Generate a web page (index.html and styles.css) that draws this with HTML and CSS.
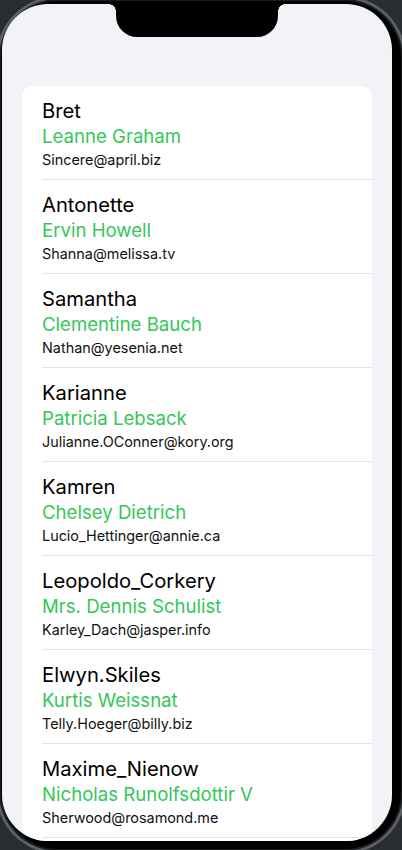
FILE: index.html
```html
<!DOCTYPE html>
<html lang="en">
<head>
<meta charset="utf-8">
<title>Users</title>
<link rel="stylesheet" href="styles.css">
</head>
<body>
<div class="device">
  <div class="screen">
    <div class="notch"></div>
    <ul class="card">
      <li class="row"><div class="username">Bret</div><div class="name">Leanne Graham</div><div class="email">Sincere@april.biz</div></li>
      <li class="row"><div class="username">Antonette</div><div class="name">Ervin Howell</div><div class="email">Shanna@melissa.tv</div></li>
      <li class="row"><div class="username">Samantha</div><div class="name">Clementine Bauch</div><div class="email">Nathan@yesenia.net</div></li>
      <li class="row"><div class="username">Karianne</div><div class="name">Patricia Lebsack</div><div class="email">Julianne.OConner@kory.org</div></li>
      <li class="row"><div class="username">Kamren</div><div class="name">Chelsey Dietrich</div><div class="email">Lucio_Hettinger@annie.ca</div></li>
      <li class="row"><div class="username">Leopoldo_Corkery</div><div class="name">Mrs. Dennis Schulist</div><div class="email">Karley_Dach@jasper.info</div></li>
      <li class="row"><div class="username">Elwyn.Skiles</div><div class="name">Kurtis Weissnat</div><div class="email">Telly.Hoeger@billy.biz</div></li>
      <li class="row"><div class="username">Maxime_Nienow</div><div class="name">Nicholas Runolfsdottir V</div><div class="email">Sherwood@rosamond.me</div></li>
    </ul>
  </div>
</div>
</body>
</html>
```
FILE: styles.css
```css
* { box-sizing: border-box; }
html, body {
  margin: 0;
  padding: 0;
  width: 402px;
  height: 850px;
  overflow: hidden;
  background: #2a2d30;
}
.device {
  width: 410px;
  height: 858px;
  margin: -4px;
  padding: 8px 14px 13px 6px;
  background: #000;
  border-radius: 62px;
  box-shadow: inset 0 0 0 3px #5a6066, inset 0 0 0 5px #1a1c1e;
  display: flex;
}
.screen {
  position: relative;
  flex: 1;
  background: #f2f2f7;
  border-radius: 46px;
  overflow: hidden;
  padding: 82px 20px 0 20px;
  font-family: Inter, "Noto Sans", sans-serif;
}
.notch {
  position: absolute;
  top: 0;
  left: 114px;
  width: 162px;
  height: 33px;
  background: #000;
  border-radius: 0 0 21px 21px;
}
.notch::before,
.notch::after {
  content: "";
  position: absolute;
  top: 0;
  width: 7px;
  height: 7px;
}
.notch::before {
  left: -7px;
  background: radial-gradient(circle at 0 100%, transparent 6.5px, #000 7px);
}
.notch::after {
  right: -7px;
  background: radial-gradient(circle at 100% 100%, transparent 6.5px, #000 7px);
}
.card {
  list-style: none;
  margin: 0;
  padding: 0 0 40px 20px;
  background: #fff;
  border-radius: 10px;
}
.row {
  height: 94px;
  padding-top: 12px;
  border-bottom: 1px solid #e4e4e8;
}
.username {
  font-size: 20.2px;
  line-height: 25px;
  color: #000;
}
.name {
  font-size: 18.6px;
  line-height: 27px;
  color: #34c759;
}
.email {
  font-size: 14.4px;
  line-height: 20px;
  color: #111;
}
```
